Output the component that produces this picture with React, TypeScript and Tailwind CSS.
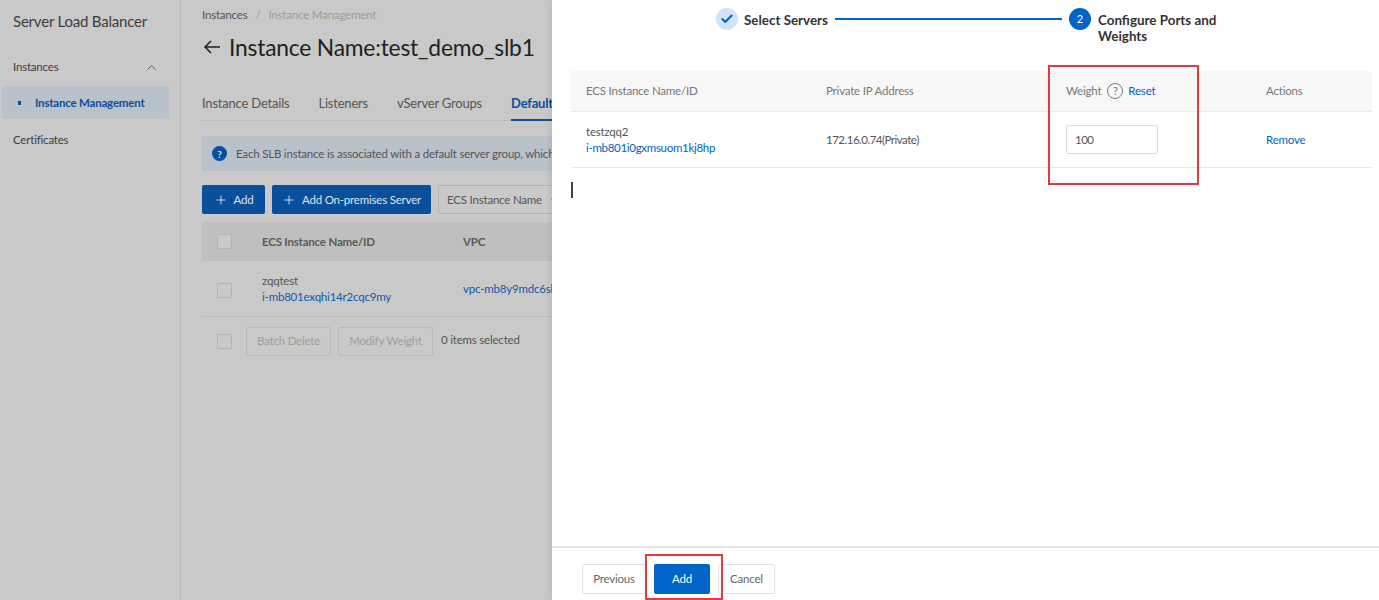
import { Check, ChevronDown, ChevronUp, Plus } from "lucide-react"

function Checkbox() {
  return <div className="w-[15px] h-[15px] border border-[#b4b4b4] rounded-[2px] bg-[#c9c9c9]" />
}

function Sidebar() {
  return (
    <aside className="w-[169px] shrink-0 border-r border-[#bdbdbd] box-content pr-[11px]">
      <div className="pl-[13px] pt-[11px] text-[15px] leading-[20px] text-[#3d3d3d]">Server Load Balancer</div>
      <div className="flex items-center justify-between pl-[13px] pr-[10px] mt-[26px] h-[20px] text-[#3d3d3d]">
        <span>Instances</span>
        <ChevronUp size={15} strokeWidth={1.25} />
      </div>
      <div className="ml-[2px] mt-[9px] h-[33px] bg-[#b9c1cb] rounded-[2px] flex items-center pl-[16px] gap-[14px] text-[#0a4f9c] font-bold">
        <div className="w-[3px] h-[4px] bg-[#0a4f9c]" />
        <span>Instance Management</span>
      </div>
      <div className="pl-[13px] mt-[13px] h-[20px] text-[#3d3d3d]">Certificates</div>
    </aside>
  )
}

function MainPanel() {
  return (
    <main className="flex-1 min-w-0 pl-[21px] overflow-hidden">
      <div className="flex items-center h-[14px] mt-[8px] gap-[8px] text-[#555555]">
        <span>Instances</span>
        <span className="text-[#9a9a9a]">/</span>
        <span className="text-[#9c9c9c]">Instance Management</span>
      </div>
      <div className="flex items-center gap-[8px] mt-[10px] h-[30px] text-[#1f1f1f]">
        <svg width="18" height="16" viewBox="0 0 18 16" fill="none" stroke="currentColor" strokeWidth="1.5" className="ml-[1px]">
          <path d="M17 8H2M8 2L2 8l6 6" />
        </svg>
        <h1 className="text-[22.8px] leading-[30px] whitespace-nowrap">Instance Name:test_demo_slb1</h1>
      </div>
      <div className="mt-[33px] flex w-[600px] h-[26px] border-b border-[#bdbdbd] gap-[29px] text-[13px] text-[#555555] whitespace-nowrap">
        <span>Instance Details</span>
        <span>Listeners</span>
        <span>vServer Groups</span>
        <span className="text-[#0a4f9c] font-bold border-b-2 border-[#0a4f9c] h-[26px]">Default Server Group</span>
      </div>
      <div className="mt-[15px] w-[600px] h-[35px] bg-[#b9c1cb] flex items-center pl-[10px] gap-[9px] text-[#555555] whitespace-nowrap">
        <div className="w-[15px] h-[15px] rounded-full bg-[#0a4f9c] text-[#dfe6ee] text-[10px] font-bold flex items-center justify-center">?</div>
        <span>Each SLB instance is associated with a default server group, which contains the backend servers.</span>
      </div>
      <div className="mt-[14px] flex gap-[7px] h-[29px] whitespace-nowrap">
        <button className="w-[63px] bg-[#0a4f9c] rounded-[2px] text-[#dfe6ee] flex items-center justify-center gap-[6px]">
          <Plus size={14} strokeWidth={1.5} />
          Add
        </button>
        <button className="w-[159px] bg-[#0a4f9c] rounded-[2px] text-[#dfe6ee] flex items-center justify-center gap-[6px]">
          <Plus size={14} strokeWidth={1.5} />
          Add On-premises Server
        </button>
        <div className="w-[130px] border border-[#b4b4b4] rounded-[2px] flex items-center justify-between px-[8px] text-[#555555]">
          <span>ECS Instance Name</span>
          <ChevronDown size={10} />
        </div>
      </div>
      <div className="mt-[8px] w-[600px] h-[39px] bg-[#bfbfbf] flex items-center text-[#5a5a5a] font-bold whitespace-nowrap">
        <div className="w-[60px] pl-[15px]"><Checkbox /></div>
        <div className="w-[201px]">ECS Instance Name/ID</div>
        <div>VPC</div>
      </div>
      <div className="w-[600px] h-[56px] border-b border-[#bdbdbd] flex items-center whitespace-nowrap">
        <div className="w-[60px] pl-[15px] pt-[4px]"><Checkbox /></div>
        <div className="w-[201px] leading-[16px]">
          <div className="text-[#555555]">zqqtest</div>
          <div className="text-[#0f5aa8]">i-mb801exqhi14r2cqc9my</div>
        </div>
        <div className="text-[#0f5aa8]">vpc-mb8y9mdc6sb</div>
      </div>
      <div className="mt-[9px] flex items-center h-[30px] whitespace-nowrap">
        <div className="w-[44px] pl-[15px]"><Checkbox /></div>
        <div className="w-[85px] h-[29px] mr-[7px] border border-[#bababa] rounded-[2px] flex items-center justify-center text-[#9f9f9f]">Batch Delete</div>
        <div className="w-[95px] h-[29px] border border-[#bababa] rounded-[2px] flex items-center justify-center text-[#9f9f9f]">Modify Weight</div>
        <span className="ml-[8px] text-[#555555] -mt-[3px]">0 items selected</span>
      </div>
    </main>
  )
}

function Stepper() {
  return (
    <div className="flex h-[64px] pt-[8px] pl-[164px] text-[#333333] font-bold text-[13.4px] leading-[16px] tracking-normal">
      <div className="w-[22px] h-[22px] rounded-full bg-[#cfe4f8] flex items-center justify-center text-[#0064c8]">
        <Check size={14} strokeWidth={3.5} />
      </div>
      <span className="ml-[6px] mt-[4px] w-[84px] whitespace-nowrap">Select Servers</span>
      <div className="ml-[7px] mt-[10px] w-[227px] h-[2px] bg-[#0064c8]" />
      <div className="ml-[7px] w-[22px] h-[22px] rounded-full bg-[#0064c8] flex items-center justify-center text-white text-[11px] font-normal">2</div>
      <span className="ml-[7px] mt-[4px] w-[130px]">Configure Ports and Weights</span>
    </div>
  )
}

function Drawer() {
  return (
    <section className="absolute top-0 right-0 bottom-0 w-[827px] bg-white flex flex-col shadow-[-2px_0_6px_rgba(0,0,0,0.08)]">
      <Stepper />
      <div className="flex-1 pl-[19px] pr-[7px] pt-[7px]">
        <div className="flex items-center h-[41px] bg-[#f7f7f7] border-b border-[#e8e8e8] text-[#777777] whitespace-nowrap">
          <div className="w-[255px] pl-[15px]">ECS Instance Name/ID</div>
          <div className="w-[240px]">Private IP Address</div>
          <div className="w-[200px] flex items-center">
            <span>Weight</span>
            <div className="ml-[6px] w-[16px] h-[16px] rounded-full border border-[#777777] text-[11px] flex items-center justify-center">?</div>
            <span className="ml-[5px] text-[#0064c8]">Reset</span>
          </div>
          <div>Actions</div>
        </div>
        <div className="flex items-center h-[56px] border-b border-[#e8e8e8] text-[#555555] whitespace-nowrap">
          <div className="w-[255px] pl-[15px] leading-[16px]">
            <div>testzqq2</div>
            <div className="text-[#0064c8] tracking-[-0.3px]">i-mb801i0gxmsuom1kj8hp</div>
          </div>
          <div className="w-[240px] tracking-[-0.5px]">172.16.0.74(Private)</div>
          <div className="w-[200px]">
            <div className="w-[92px] h-[29px] border border-[#dedede] rounded-[2px] flex items-center pl-[8px] tracking-[-0.5px]">100</div>
          </div>
          <div className="text-[#0064c8]">Remove</div>
        </div>
        <div className="w-[1.5px] h-[16px] bg-[#444444] mt-[14px]" />
      </div>
      <div className="h-[54px] border-t-2 border-[#e5e5e5] flex items-start pt-[16px] pl-[30px] whitespace-nowrap">
        <button className="w-[64px] h-[30px] border border-[#e3e3e3] rounded-[2px] text-[#666666]">Previous</button>
        <button className="ml-[8px] w-[56px] h-[30px] bg-[#0064c8] rounded-[2px] text-white">Add</button>
        <button className="ml-[8px] w-[57px] h-[30px] border border-[#e3e3e3] rounded-[2px] text-[#666666]">Cancel</button>
      </div>
      {/* red annotation boxes */}
      <div className="absolute left-[496px] top-[65px] w-[151px] h-[120px] border-2 border-[#e8383d]" />
      <div className="absolute left-[93px] top-[554px] w-[78px] h-[46px] border-2 border-[#e8383d]" />
    </section>
  )
}

export default function App() {
  return (
    <div className="relative w-[1379px] h-[600px] overflow-hidden flex bg-[#c9c9c9] text-[11.5px] leading-[16px] tracking-[-0.2px] font-['Lato','Open_Sans',sans-serif]">
      <Sidebar />
      <MainPanel />
      <Drawer />
    </div>
  )
}
